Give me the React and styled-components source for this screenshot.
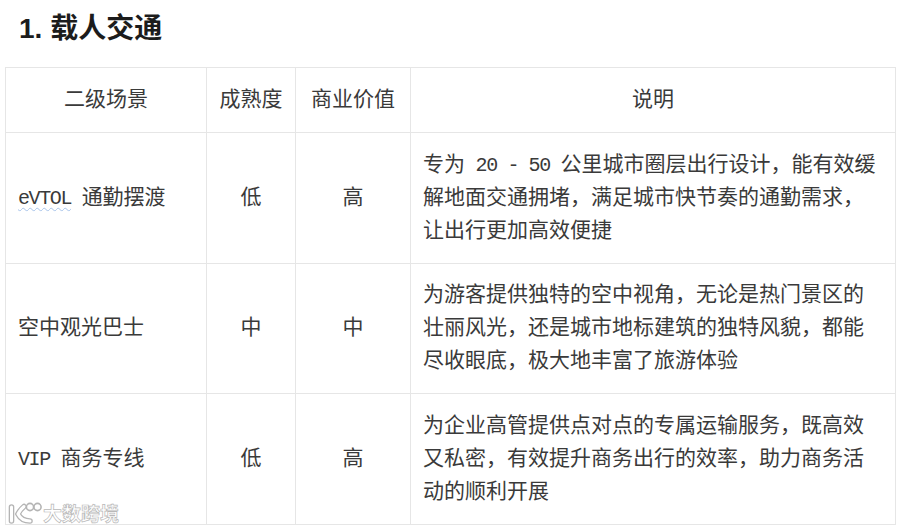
import React from "react";
import styled, { createGlobalStyle } from "styled-components";

const Global = createGlobalStyle`
  html, body { margin: 0; padding: 0; background: #fff; }
  #root { width: 900px; height: 529px; overflow: hidden; }
`;

const Page = styled.div`
  position: relative;
  width: 900px;
  height: 529px;
  padding: 11px 5px 0 5px;
  box-sizing: border-box;
  background: #fff;
`;

const Heading = styled.h1`
  margin: 0 0 20px 14px;
  height: 36px;
  font: 700 28px/36px "Liberation Sans", "Noto Sans CJK SC", sans-serif;
  color: #1c1c1c;
`;

const Table = styled.table`
  width: 890px;
  table-layout: fixed;
  border-collapse: collapse;
  font: 400 21px/33px "Liberation Mono", "Noto Sans CJK SC", monospace;
  color: #3a3a3a;
`;

const Row = styled.tr`
  height: ${(p) => p.$h}px;
`;

const Cell = styled.td`
  border: 1px solid #e6e6e6;
  padding: 0 12px;
  font-weight: 400;
  text-align: ${(p) => p.$align || "center"};
  vertical-align: middle;
  box-sizing: border-box;
  white-space: nowrap;
`;

const Desc = styled.div`
  display: flex;
  flex-direction: column;
`;

const Line = styled.span`
  display: block;
`;

const Latin = styled.span`
  font-size: 20px;
  letter-spacing: -1.4px;
  white-space: pre;
`;

const Squiggle = styled(Latin)`
  text-decoration: underline wavy #a8c4ea 1px;
  text-underline-offset: 3px;
`;

const Watermark = styled.div`
  position: absolute;
  left: 8px;
  bottom: 5px;
  display: flex;
  align-items: center;
  gap: 1px;
`;

const WatermarkText = styled.span`
  font: 700 19px/22px "Noto Sans CJK SC", sans-serif;
  color: #fff;
  -webkit-text-stroke: 0.7px #b8b8b8;
`;

const rows = [
  {
    h: 131,
    name: (
      <>
        <Squiggle>eVTOL</Squiggle>
        <Latin> </Latin>通勤摆渡
      </>
    ),
    level: "低",
    value: "高",
    lines: [
      <>
        专为<Latin> 20 - 50 </Latin>公里城市圈层出行设计，能有效缓
      </>,
      "解地面交通拥堵，满足城市快节奏的通勤需求，",
      "让出行更加高效便捷",
    ],
  },
  {
    h: 130,
    name: "空中观光巴士",
    level: "中",
    value: "中",
    lines: [
      "为游客提供独特的空中视角，无论是热门景区的",
      "壮丽风光，还是城市地标建筑的独特风貌，都能",
      "尽收眼底，极大地丰富了旅游体验",
    ],
  },
  {
    h: 131,
    name: (
      <>
        <Latin>VIP </Latin>商务专线
      </>
    ),
    level: "低",
    value: "高",
    lines: [
      "为企业高管提供点对点的专属运输服务，既高效",
      "又私密，有效提升商务出行的效率，助力商务活",
      "动的顺利开展",
    ],
  },
];

export default function App() {
  return (
    <Page>
      <Global />
      <Heading>1. 载人交通</Heading>
      <Table>
        <colgroup>
          <col style={{ width: 201 }} />
          <col style={{ width: 89 }} />
          <col style={{ width: 115 }} />
          <col style={{ width: 485 }} />
        </colgroup>
        <thead>
          <Row $h={65}>
            <Cell as="th">二级场景</Cell>
            <Cell as="th">成熟度</Cell>
            <Cell as="th">商业价值</Cell>
            <Cell as="th">说明</Cell>
          </Row>
        </thead>
        <tbody>
          {rows.map((r, i) => (
            <Row key={i} $h={r.h}>
              <Cell $align="left">{r.name}</Cell>
              <Cell>{r.level}</Cell>
              <Cell>{r.value}</Cell>
              <Cell $align="left">
                <Desc>
                  {r.lines.map((l, j) => (
                    <Line key={j}>{l}</Line>
                  ))}
                </Desc>
              </Cell>
            </Row>
          ))}
        </tbody>
      </Table>
      <Watermark>
        <svg width="34" height="22" viewBox="0 0 34 22" fill="none" strokeLinecap="round">
          <g stroke="#b4b4b4" strokeWidth="5.6">
            <path d="M3.5 5v14" />
            <path d="M16 4.5C12 8 11 10 10 12c2 4 6 7 12 7" />
          </g>
          <g stroke="#fff" strokeWidth="3">
            <path d="M3.5 5v14" />
            <path d="M16 4.5C12 8 11 10 10 12c2 4 6 7 12 7" />
          </g>
          <circle cx="22" cy="5" r="3.6" stroke="#b4b4b4" strokeWidth="1.6" />
          <circle cx="29.5" cy="5" r="3.6" stroke="#b4b4b4" strokeWidth="1.6" />
        </svg>
        <WatermarkText>大数跨境</WatermarkText>
      </Watermark>
    </Page>
  );
}
